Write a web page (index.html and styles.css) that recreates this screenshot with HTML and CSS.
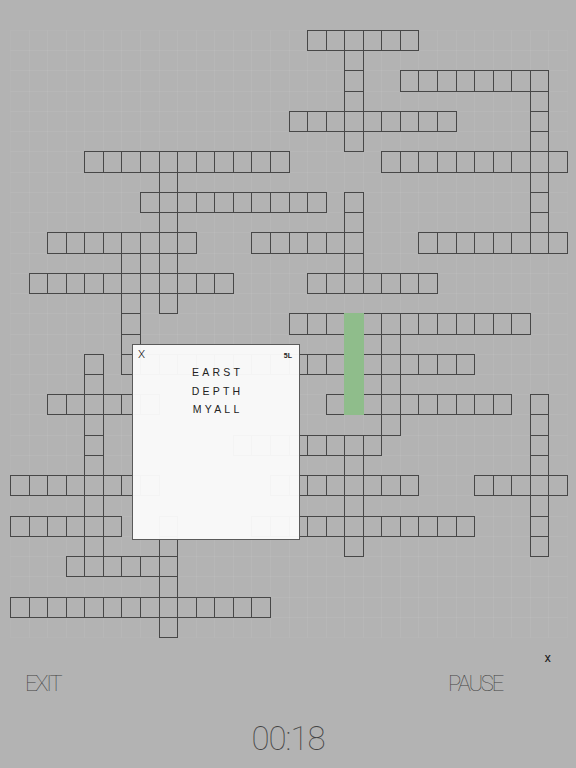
FILE: index.html
```html
<!DOCTYPE html>
<html lang="en">
<head>
<meta charset="utf-8">
<title>Crossword</title>
<link rel="stylesheet" href="styles.css">
</head>
<body>
<div class="screen">
  <div class="board" id="board"></div>

  <div class="modal">
    <div class="modal-head">
      <span class="modal-close">X</span>
      <span class="modal-len">5L</span>
    </div>
    <ul class="words">
      <li>EARST</li>
      <li>DEPTH</li>
      <li>MYALL</li>
    </ul>
  </div>

  <div class="footer">
    <div class="close-row"><span class="small-x">x</span></div>
    <div class="controls">
      <span class="btn">EXIT</span>
      <span class="btn">PAUSE</span>
    </div>
    <div class="timer">00:18</div>
  </div>
</div>
<script src="script.js"></script>
</body>
</html>
```

FILE: styles.css
```css
html, body {
  margin: 0;
  padding: 0;
}
body {
  background: #b3b3b3;
  width: 576px;
  height: 768px;
  overflow: hidden;
}
.screen {
  position: relative;
  width: 576px;
  height: 768px;
  padding-top: 30px;
  box-sizing: border-box;
}
.board {
  margin-left: 10px;
  width: 557px;
  height: 607px;
  display: grid;
  grid-template-columns: repeat(30, 1fr);
  grid-template-rows: repeat(30, 1fr);
}
.sq {
  margin: 0 -1px -1px 0;
  border: 1px solid rgba(255, 255, 255, 0.035);
}
.sq.cell {
  position: relative;
  z-index: 1;
  border-color: #474747;
}
.sq.active {
  z-index: 2;
  background: #8fbd8b;
  border-color: #8fbd8b;
}

.modal {
  position: absolute;
  left: 132px;
  top: 344px;
  width: 168px;
  height: 196px;
  box-sizing: border-box;
  border: 1px solid #5a5a5a;
  background: rgba(250, 250, 250, 0.97);
  z-index: 5;
  font-family: "Liberation Sans", Arial, sans-serif;
  color: #222;
}
.modal-head {
  display: flex;
  justify-content: space-between;
  align-items: flex-start;
  height: 15px;
  padding: 4px 7px 0 5px;
  box-sizing: border-box;
}
.modal-close {
  font-family: Roboto, sans-serif;
  font-weight: 300;
  font-size: 11.5px;
  line-height: 11px;
  color: #111;
}
.modal-len {
  font-family: "Liberation Sans", Arial, sans-serif;
  font-weight: 700;
  font-size: 7px;
  line-height: 7px;
  margin-top: 3px;
}
.words {
  list-style: none;
  margin: 3px 0 0 0;
  padding: 0;
  text-align: center;
}
.words li {
  font-size: 10.5px;
  line-height: 18.5px;
  letter-spacing: 3.2px;
  padding-left: 3.2px;
  color: #222;
}

.footer {
  font-family: Roboto, sans-serif;
  color: #444;
}
.close-row {
  display: flex;
  justify-content: flex-end;
  margin-top: 14px;
  height: 13px;
  padding-right: 25px;
}
.small-x {
  font-family: Roboto, sans-serif;
  font-weight: 400;
  font-size: 13px;
  line-height: 13px;
  color: #222;
}
.controls {
  display: flex;
  justify-content: space-between;
  margin-top: 9px;
  height: 22px;
  padding: 0 74px 0 25px;
}
.btn {
  font-weight: 100;
  font-size: 22px;
  line-height: 22px;
  letter-spacing: -2.2px;
}
.timer {
  margin-top: 27px;
  text-align: center;
  font-weight: 100;
  font-size: 33px;
  line-height: 33px;
  letter-spacing: -1px;
}
```

FILE: script.js
```js
(function () {
  var N = 30;
  var H = [[0,16,21],[2,21,28],[4,15,23],[6,4,14],[6,20,29],[8,7,16],
    [10,2,9],[10,13,18],[10,22,29],[12,1,11],[12,16,22],[14,15,27],
    [16,6,24],[18,2,7],[18,17,26],[20,12,19],[22,0,7],[22,14,21],
    [22,25,29],[24,0,5],[24,13,24],[26,3,8],[28,0,13]];
  var V = [[18,0,5],[28,2,10],[8,6,13],[18,8,12],[6,10,16],[20,14,19],
    [18,14,18],[4,16,26],[28,18,25],[18,20,25],[8,24,29]];
  var ACTIVE = [18,14,18];
  var map = [];
  for (var r = 0; r < N; r++) { map.push([]); for (var c = 0; c < N; c++) map[r].push(0); }
  H.forEach(function (w) { for (var c = w[1]; c <= w[2]; c++) map[w[0]][c] = 1; });
  V.forEach(function (w) { for (var r = w[1]; r <= w[2]; r++) map[r][w[0]] = 1; });
  for (var r2 = ACTIVE[1]; r2 <= ACTIVE[2]; r2++) map[r2][ACTIVE[0]] = 2;
  var board = document.getElementById('board');
  var frag = document.createDocumentFragment();
  for (var i = 0; i < N; i++) {
    for (var j = 0; j < N; j++) {
      var d = document.createElement('div');
      d.className = 'sq' + (map[i][j] ? ' cell' : '') + (map[i][j] === 2 ? ' active' : '');
      frag.appendChild(d);
    }
  }
  board.appendChild(frag);
})();
```
